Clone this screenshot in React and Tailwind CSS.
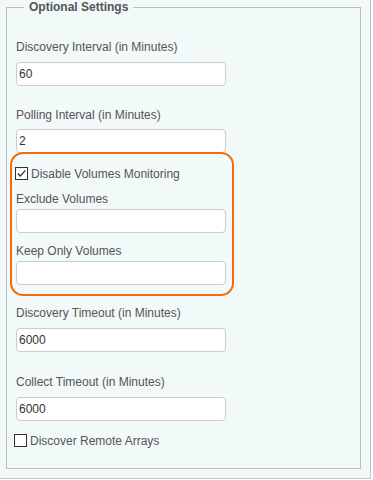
import React, { useState } from "react";

const font = { fontFamily: '"Liberation Sans", Arial, sans-serif' };

function Label({ children, className = "" }) {
  return (
    <div className={"h-[14px] text-[12px] leading-[14px] text-[#555] whitespace-nowrap " + className}>
      {children}
    </div>
  );
}

function TextInput({ value, onChange, className = "" }) {
  return (
    <input
      type="text"
      value={value}
      onChange={(e) => onChange(e.target.value)}
      className={
        "block w-[210px] h-[24px] rounded-[4px] border border-[#cccccc] bg-white px-[2px] text-[12px] text-[#333] outline-none " +
        className
      }
    />
  );
}

function Check({ checked, onToggle, children, className = "" }) {
  return (
    <label className={"flex items-center h-[13px] cursor-pointer " + className} onClick={onToggle}>
      <span className="flex items-center justify-center w-[13px] h-[13px] border border-[#333] bg-white shrink-0">
        {checked && (
          <svg width="11" height="11" viewBox="0 0 11 11">
            <path d="M1.8 5.6 L4.3 8.1 L9.3 2.4" fill="none" stroke="#333" strokeWidth="1.4" />
          </svg>
        )}
      </span>
      <span className="ml-[3px] text-[12px] leading-[14px] text-[#555] whitespace-nowrap">{children}</span>
    </label>
  );
}

export default function App() {
  const [discovery, setDiscovery] = useState("60");
  const [polling, setPolling] = useState("2");
  const [disableVolumes, setDisableVolumes] = useState(true);
  const [exclude, setExclude] = useState("");
  const [keepOnly, setKeepOnly] = useState("");
  const [discoveryTimeout, setDiscoveryTimeout] = useState("6000");
  const [collectTimeout, setCollectTimeout] = useState("6000");
  const [remoteArrays, setRemoteArrays] = useState(false);

  return (
    <div style={font} className="w-[371px] h-[479px] bg-[#f2f9f9] border-r border-b border-[#c4c4c4]">
      <fieldset className="ml-[6px] w-[355px] border border-[#bdbdbd] pl-[9px] pb-[21px]">
        <legend className="ml-[8px] px-[5px] h-[14px] text-[12px] leading-[14px] font-bold text-[#555]">
          Optional Settings
        </legend>

        <Label className="mt-[26px]">Discovery Interval (in Minutes)</Label>
        <TextInput className="mt-[8px]" value={discovery} onChange={setDiscovery} />

        <Label className="mt-[22px]">Polling Interval (in Minutes)</Label>
        <TextInput className="mt-[7px]" value={polling} onChange={setPolling} />

        <div className="-ml-[6px] -mt-[1px] w-[224px] rounded-[13px] border-2 border-[#f5690f] pl-[4px] pt-[13px] pb-[9px]">
          <Check
            className="-ml-[1px]"
            checked={disableVolumes}
            onToggle={() => setDisableVolumes(!disableVolumes)}
          >
            Disable Volumes Monitoring
          </Check>
          <Label className="mt-[12px]">Exclude Volumes</Label>
          <TextInput className="mt-[3px]" value={exclude} onChange={setExclude} />
          <Label className="mt-[11px]">Keep Only Volumes</Label>
          <TextInput className="mt-[3px]" value={keepOnly} onChange={setKeepOnly} />
        </div>

        <Label className="mt-[10px]">Discovery Timeout (in Minutes)</Label>
        <TextInput className="mt-[8px]" value={discoveryTimeout} onChange={setDiscoveryTimeout} />

        <Label className="mt-[23px]">Collect Timeout (in Minutes)</Label>
        <TextInput className="mt-[8px]" value={collectTimeout} onChange={setCollectTimeout} />

        <Check
          className="mt-[13px] -ml-[2px]"
          checked={remoteArrays}
          onToggle={() => setRemoteArrays(!remoteArrays)}
        >
          Discover Remote Arrays
        </Check>
      </fieldset>
    </div>
  );
}
